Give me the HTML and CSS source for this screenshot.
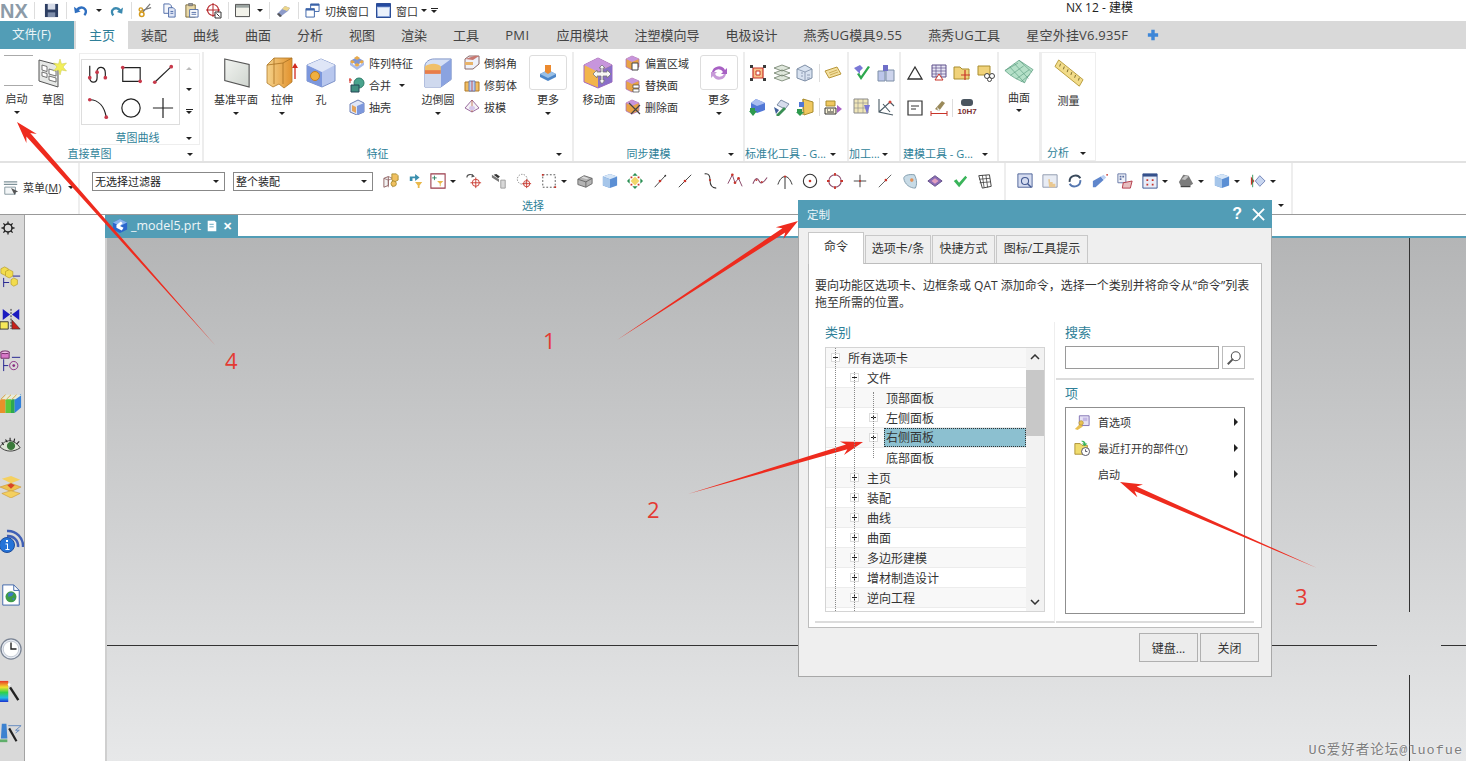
FILE: index.html
```html
<!DOCTYPE html>
<html lang="zh-CN">
<head>
    <meta charset="UTF-8">
    <title>NX 12 - 建模</title>
    <link rel="stylesheet" href="styles.css">
</head>
<body>
    <!-- shared icons -->
    <svg class="sprite" aria-hidden="true">
        <defs>
            <linearGradient id="gBlue" x1="0" y1="0" x2="0" y2="1"><stop offset="0" stop-color="#c9d6f2"/><stop offset="1" stop-color="#6f8fd0"/></linearGradient>
            <linearGradient id="gOrange" x1="0" y1="0" x2="1" y2="0"><stop offset="0" stop-color="#f5d28a"/><stop offset="1" stop-color="#e2922e"/></linearGradient>
            <linearGradient id="gPlane" x1="0" y1="0" x2="1" y2="1"><stop offset="0" stop-color="#f2f4f1"/><stop offset="1" stop-color="#cfd5cf"/></linearGradient>
            <linearGradient id="gHeat" x1="0" y1="0" x2="0" y2="1"><stop offset="0" stop-color="#e8362a"/><stop offset=".3" stop-color="#f3e12e"/><stop offset=".55" stop-color="#2ed14a"/><stop offset=".8" stop-color="#22b8e8"/><stop offset="1" stop-color="#1a2fd0"/></linearGradient>
        </defs>
        <symbol id="save" viewBox="0 0 16 16"><path d="M1 1h14v14H1z" fill="#2e3f63"/><path d="M4 1h8v6H4z" fill="#d5dbe8"/><path d="M4 10h8v5H4z" fill="#7e8daa"/></symbol>
        <symbol id="undo" viewBox="0 0 16 16"><path d="M3 9a5 5 0 0 1 9-2c1 1 1 4-1 6" fill="none" stroke="#2f6fc0" stroke-width="2.6"/><path d="M0 4l1 7 6-2z" fill="#2f6fc0"/></symbol>
        <symbol id="redo" viewBox="0 0 16 16"><path d="M13 9a5 5 0 0 0-9-2c-1 1-1 4 1 6" fill="none" stroke="#3c8ab0" stroke-width="2.6"/><path d="M16 4l-1 7-6-2z" fill="#3c8ab0"/></symbol>
        <symbol id="scissors" viewBox="0 0 16 16"><path d="M13 1L5 10M14 5L4 8" stroke="#777" stroke-width="1.3" fill="none"/><circle cx="4" cy="12" r="2.4" fill="none" stroke="#d49a1c" stroke-width="1.6"/><circle cx="3" cy="7" r="1.8" fill="none" stroke="#d49a1c" stroke-width="1.4"/></symbol>
        <symbol id="copy" viewBox="0 0 16 16"><path d="M2 1h6l2 2v8H2z" fill="#f4f6fb" stroke="#4f6ca8"/><path d="M7 5h5l2 2v8H7z" fill="#dfe6f6" stroke="#4f6ca8"/><path d="M9 9h3M9 11h3" stroke="#4f6ca8"/></symbol>
        <symbol id="paste" viewBox="0 0 16 16"><path d="M2 2h10v13H2z" fill="#e9d9a8" stroke="#7a6a3a"/><path d="M5 0h4v3H5z" fill="#999" stroke="#555" stroke-width=".5"/><path d="M6 7h9v8H6z" fill="#fff" stroke="#4f6ca8"/><path d="M8 10h5M8 12h5" stroke="#4f6ca8"/></symbol>
        <symbol id="crosshair" viewBox="0 0 16 16"><circle cx="7" cy="7" r="5.5" fill="none" stroke="#b5272a" stroke-width="1.2"/><path d="M7 0v14M0 7h14" stroke="#b5272a"/><path d="M9 9h6v6H9z" fill="#fff" stroke="#333"/><path d="M10.500 10.500l3 3" stroke="#333"/></symbol>
        <symbol id="windowbox" viewBox="0 0 16 16"><path d="M.5 1.500h15v13H.5z" fill="#f2f2ea" stroke="#444"/><path d="M1 2h14v3H1z" fill="#9aa3a0"/></symbol>
        <symbol id="eraser" viewBox="0 0 16 16"><path d="M1 11l8-8 5 2-2 3-8 6z" fill="#8d9bc9"/><path d="M9 3l5 2-3 3-5-2z" fill="#ecd589"/><path d="M1 11l3 3 2-1-3-3z" fill="#555"/></symbol>
        <symbol id="swap" viewBox="0 0 16 16"><path d="M6 1h9v8H6z" fill="#fff" stroke="#3a62a8"/><path d="M1 6h9v9H1z" fill="#fff" stroke="#3a62a8"/><path d="M6 1h9v2H6zM1 6h9v2H1z" fill="#3a62a8"/></symbol>
        <symbol id="winblue" viewBox="0 0 16 16"><path d="M.5.500h15v15H.5z" fill="url(#gBlue)" stroke="#1c3f8c"/><path d="M1 1h14v3H1z" fill="#244aa0"/><path d="M2 5h12v9H2z" fill="#eaf1fb"/></symbol>

        <symbol id="sketch" viewBox="0 0 30 30"><path d="M1 2l19 5v22L1 23z" fill="#e6e8e6" stroke="#555"/><path d="M4 7l5 1.500v5l-5-1.500zM4 14l5 1.500v4l-5-1.500zM11 11l7 2v5l-7-2zM11 18l7 2v4l-7-2z" fill="#fff" stroke="#555" stroke-width=".8"/><path d="M22 1l1.500 5 5-1-3.500 4 3.500 4-5-1-1.500 5-1.500-5-5 1 3.500-4-3.500-4 5 1z" fill="#f2ee5a" stroke="#c9c84a" stroke-width=".5"/></symbol>
        <symbol id="c-spline" viewBox="0 0 24 24"><path d="M3 3v13c0 7 8 6 8 0V9c0-6 9-6 9 2v5" fill="none" stroke="#222" stroke-width="1.3"/><circle cx="3" cy="16" r="2" fill="#c8384a"/><circle cx="11" cy="10" r="2" fill="#c8384a"/><circle cx="20" cy="16" r="2" fill="#c8384a"/></symbol>
        <symbol id="c-rect" viewBox="0 0 24 24"><path d="M3 5h19v15H3z" fill="none" stroke="#222" stroke-width="1.3"/><circle cx="3" cy="5" r="2" fill="#c8384a"/><circle cx="22" cy="20" r="2" fill="#c8384a"/></symbol>
        <symbol id="c-line" viewBox="0 0 24 24"><path d="M3 21L21 4" stroke="#222" stroke-width="1.3"/><circle cx="3" cy="21" r="2" fill="#c8384a"/><circle cx="21" cy="4" r="2" fill="#c8384a"/></symbol>
        <symbol id="c-arc" viewBox="0 0 24 24"><path d="M3 3c10 0 16 8 18 19" fill="none" stroke="#222" stroke-width="1.3"/><circle cx="3" cy="3" r="2" fill="#c8384a"/><circle cx="21" cy="22" r="2" fill="#c8384a"/></symbol>
        <symbol id="c-circle" viewBox="0 0 24 24"><circle cx="12" cy="12" r="10" fill="none" stroke="#222" stroke-width="1.3"/></symbol>
        <symbol id="c-plus" viewBox="0 0 24 24"><path d="M12 1v22M1 12h22" stroke="#222" stroke-width="1.3"/></symbol>

        <symbol id="datum" viewBox="0 0 30 32"><path d="M3 1l26 6v24L3 24z" fill="url(#gPlane)" stroke="#555" stroke-width="1.2"/></symbol>
        <symbol id="extrude" viewBox="0 0 32 32"><path d="M1 8l7-7 18 0 0 24-8 6-5-4-6 3-6-4z" fill="url(#gOrange)" stroke="#b07a2a" stroke-width=".8"/><path d="M8 1v26M17 6v21M1 8l16-2 9-5" fill="none" stroke="#a97122" stroke-width=".8"/><path d="M29 22V9" stroke="#d02a20" stroke-width="1.300"/><path d="M26 11l3-5 3 5z" fill="#d02a20"/></symbol>
        <symbol id="hole" viewBox="0 0 30 30"><path d="M15 1l14 6v16l-13 6L1 23V7z" fill="#b8c7ee" stroke="#7e93c9"/><path d="M1 7l15 7v15L1 23z" fill="#7c97dc"/><path d="M1 7l14-6 14 6-13 7z" fill="#dfe6f7"/><circle cx="9" cy="18" r="4.500" fill="#f0b040" stroke="#c27d1e"/></symbol>
        <symbol id="pattern" viewBox="0 0 16 16"><path d="M8 2l7 4-7 4-7-4z" fill="#7f96d4"/><path d="M8 1l3 2-3 2-3-2zM3 5l3 2-3 2-2-2zM13 5l2 2-2 2-3-2zM8 8l3 2-3 2-3-2z" fill="#e8a94a"/><path d="M1 7v3l7 5 7-5V7l-7 5z" fill="#a9bbea"/></symbol>
        <symbol id="unite" viewBox="0 0 16 16"><circle cx="10" cy="6" r="5" fill="#49a38d" stroke="#2f7d6a"/><path d="M2 8h8v7H2z" fill="#3f8f80" stroke="#245"/><path d="M1 1v5M0 3h3" stroke="#d02a20"/></symbol>
        <symbol id="shell" viewBox="0 0 16 16"><path d="M1 5l8-4 6 3v9l-7 3-7-3z" fill="#dfe6f7" stroke="#6d7fb5"/><path d="M8 7v9l7-3V4z" fill="#7c97dc"/><path d="M3 6l4 2v6l-4-2z" fill="#e2a35c"/></symbol>
        <symbol id="blend" viewBox="0 0 30 32"><path d="M1 9c0-5 5-8 10-8h18v22l-11 8H1z" fill="#d5e0f5" stroke="#7a8fc4"/><path d="M1 9c5-4 14-4 17 0h11L18 16H1z" fill="#f0c06a"/><path d="M1 13h17v4H1z" fill="#e87d4a"/><path d="M18 9l11-8v22l-11 8z" fill="#8aa3e0"/><path d="M1 17h17v14H1z" fill="#cfd9ee"/></symbol>
        <symbol id="chamfer" viewBox="0 0 16 16"><path d="M1 4l4-3h10v8l-6 5H1z" fill="#eef1fa" stroke="#8a6a6a"/><path d="M1 4l8 1 6-4-4-.2z" fill="#c87870"/><path d="M1 7h8v3H1z" fill="#e8b36a"/></symbol>
        <symbol id="trim" viewBox="0 0 16 16"><path d="M1 5h14v9H1z" fill="#f0bd62" stroke="#b07a2a"/><path d="M5 4h6v10H5z" fill="#bcd0f2" stroke="#6d7fb5"/><path d="M8 4v10" stroke="#d02a20" stroke-width=".7"/></symbol>
        <symbol id="draft" viewBox="0 0 16 16"><path d="M8 1L1 9l7 4 7-4z" fill="#f4f2f4" stroke="#9a6ca0"/><path d="M8 1v12" stroke="#b0502a" stroke-width=".7"/><ellipse cx="8" cy="9" rx="3" ry="2" fill="#d5c6ea"/></symbol>
        <symbol id="more1" viewBox="0 0 20 20"><path d="M2 11l8-4 8 4v3l-8 4-8-4z" fill="#4d86c8"/><path d="M2 11l8 4 8-4-8-4z" fill="#9ac0e6"/><path d="M7 9V2h6v7l-3 2z" fill="#ec8a2e"/></symbol>
        <symbol id="more2" viewBox="0 0 20 20"><path d="M3 9a7 7 0 0 1 13-2l2-2v6h-6l2-2a5 5 0 0 0-9 0z" fill="#a861c4"/><path d="M17 11a7 7 0 0 1-13 2l-2 2V9h6l-2 2a5 5 0 0 0 9 0z" fill="#c79ad8"/></symbol>
        <symbol id="moveface" viewBox="0 0 32 32"><path d="M15 1l14 7v17l-14 6L1 25V8z" fill="#f2b54c" stroke="#a56ac0"/><path d="M1 8l14-7 14 7-14 7z" fill="#c795dc"/><path d="M15 15l14-7v17l-14 6z" fill="#8a6fc8"/><path d="M19 8l3 3h-2v4h4v-2l4 4-4 4v-2h-4v4h2l-3 4-3-4h2v-4h-4v2l-4-4 4-4v2h4v-4h-2z" fill="#f7f7f4" stroke="#777" stroke-width=".8"/></symbol>
        <symbol id="offsetf" viewBox="0 0 16 16"><path d="M1 4l6-3 7 3v8l-7 3-6-3z" fill="#e9a346" stroke="#a56ac0" stroke-width=".7"/><path d="M1 4l6-3 7 3-7 3z" fill="#c795dc"/><path d="M7 8h6v7H7z" fill="#fff" stroke="#444"/></symbol>
        <symbol id="replacef" viewBox="0 0 16 16"><path d="M1 4l6-3 7 3v8l-7 3-6-3z" fill="#e9a346" stroke="#a56ac0" stroke-width=".7"/><path d="M1 4l6-3 7 3-7 3z" fill="#c795dc"/><path d="M8 8h6v3H8zM8 12h6v3H8z" fill="#fff" stroke="#444" stroke-width=".7"/></symbol>
        <symbol id="deletef" viewBox="0 0 16 16"><path d="M1 4l6-3 7 3v8l-7 3-6-3z" fill="#e9a346" stroke="#a56ac0" stroke-width=".7"/><path d="M1 4l6-3 7 3-7 3z" fill="#c795dc"/><path d="M4 4l11 11M15 6L6 15" stroke="#444" stroke-width="1.200"/></symbol>

        <symbol id="st1" viewBox="0 0 18 18"><path d="M4 4h10v10H4z" fill="#f7c28a" stroke="#c8342a" stroke-width="1.200"/><path d="M7 7h4v4H7z" fill="#fff" stroke="#c8342a"/><path d="M1 1h3v3H1zM14 1h3v3h-3zM1 14h3v3H1zM14 14h3v3h-3z" fill="#3a3a3a"/></symbol>
        <symbol id="st2" viewBox="0 0 18 18"><path d="M9 1l8 3-8 3-8-3zM9 6l8 3-8 3-8-3zM9 11l8 3-8 3-8-3z" fill="#dfe7dc" stroke="#6f7d6a" stroke-width=".8"/></symbol>
        <symbol id="st3" viewBox="0 0 18 18"><path d="M9 1l7 4v9l-7 3-8-3V5z" fill="#d8e2f0" stroke="#7d8ea6"/><path d="M1 5l8 3 7-3M9 8v9M5 9h2M5 12h2M11 11h3M11 14h3" fill="none" stroke="#7d8ea6" stroke-width=".8"/></symbol>
        <symbol id="st4" viewBox="0 0 18 18"><path d="M1 7l12-4 4 7-12 4z" fill="#f3df9e" stroke="#b99738"/><path d="M5 9l8-3M6 11l8-3" stroke="#b99738" stroke-width=".7"/></symbol>
        <symbol id="st5" viewBox="0 0 18 18"><path d="M7 1l9 4v7l-8 3-6-3V5z" fill="#5177d6"/><path d="M7 1l9 4-8 3-6-3z" fill="#a9bdf0"/><path d="M1 10h5v3h2l-4 5-4-5h1z" fill="#2e9a4e"/></symbol>
        <symbol id="st6" viewBox="0 0 18 18"><path d="M8 2l8 4-4 5-8-4z" fill="#d7ddec" stroke="#7d8ea6"/><path d="M3 17l8-8 2 2-8 8z" fill="#3a8f54"/><path d="M1 9l5 3-3 4z" fill="#3f5f9a"/></symbol>
        <symbol id="st7" viewBox="0 0 18 18"><path d="M7 1l10 3v10l-9 3z" fill="#f0c860" stroke="#a98d2f"/><path d="M7 1v16" stroke="#a98d2f"/><path d="M1 11h5v3h2l-4 4-4-4h1z" fill="#2e9a4e"/><path d="M3 4h5v5H3z" fill="#5177d6"/></symbol>
        <symbol id="st8" viewBox="0 0 18 18"><path d="M2 3h9v5H2z" fill="#f0c860" stroke="#a98d2f"/><path d="M1 10h11v6H1z" fill="#f7f2d8" stroke="#333"/><path d="M3 12h1M6 12h1M9 12h1M3 14h7" stroke="#333"/><path d="M13 7l5 4-5 4z" fill="#a861c4"/></symbol>
        <symbol id="mc1" viewBox="0 0 18 18"><path d="M1 4l6-3 3 3-3 3v3z" fill="#7a78d6"/><path d="M4 10l4 6L17 3l-2-1-7 10-2-3z" fill="#2ea84e"/></symbol>
        <symbol id="mc2" viewBox="0 0 18 18"><path d="M1 7h7v10H1z" fill="#bcc6ea" stroke="#7d8ea6"/><path d="M9 6h8v11H9z" fill="#cdd4ec" stroke="#7d8ea6"/><path d="M6 1h5v6H6z" fill="#6e6ec8"/></symbol>
        <symbol id="mc3" viewBox="0 0 18 18"><path d="M1 1h14v14H1z" fill="#f0e6b8" stroke="#8a8a8a"/><path d="M1 5h14M1 10h14M5 1v14M10 1v14" stroke="#8a8a8a" stroke-width=".6"/><path d="M11 7h6l-3 9z" fill="#7a78d6"/></symbol>
        <symbol id="mc4" viewBox="0 0 18 18"><path d="M2 1v13l14 3M2 14L13 4l4 4M6 6l7 8" fill="none" stroke="#4a5a64" stroke-width="1.100"/><circle cx="13" cy="4" r="1.500" fill="#d0443a"/></symbol>
        <symbol id="tri" viewBox="0 0 18 18"><path d="M9 3l7 12H2z" fill="none" stroke="#333" stroke-width="1.300"/></symbol>
        <symbol id="tbl" viewBox="0 0 18 18"><path d="M2 1h14v12H2z" fill="#e8e6f4" stroke="#5c4f8a"/><path d="M2 4h14M2 7h14M2 10h14M6 1v12M11 1v12" stroke="#5c4f8a" stroke-width=".7"/><path d="M9 10l4 6H5z" fill="#fff" stroke="#c8342a"/></symbol>
        <symbol id="cross1" viewBox="0 0 18 18"><path d="M1 3h6l2 2h7v10H1z" fill="#f0d27a" stroke="#a98d2f"/><path d="M12 6v10M8 11h9" stroke="#c8342a" stroke-width="1.200"/></symbol>
        <symbol id="cross2" viewBox="0 0 18 18"><path d="M1 2h12v9H1z" fill="#f0d27a" stroke="#a98d2f"/><circle cx="10" cy="12" r="2.500" fill="#fff" stroke="#444"/><circle cx="15" cy="12" r="2.500" fill="#fff" stroke="#444"/><circle cx="12.500" cy="15.500" r="2" fill="#fff" stroke="#444"/></symbol>
        <symbol id="note" viewBox="0 0 18 18"><path d="M2 2h14v14H2z" fill="#fff" stroke="#333" stroke-width="1.200"/><path d="M5 7h8M5 10h5" stroke="#333"/></symbol>
        <symbol id="dim" viewBox="0 0 18 18"><path d="M1 12v5M17 12v5M1 14.500h16" stroke="#c8342a"/><path d="M5 10l7-8 3 2-6 8z" fill="#9a8a5a"/><path d="M7 8l3 3-2 1z" fill="#eee"/></symbol>
        <symbol id="surface" viewBox="0 0 32 26"><path d="M1 12L16 1l15 10c-3 4-7 9-9 14-7-3-15-7-21-13z" fill="#b5e0c8" stroke="#5e9f83" stroke-width=".8"/><path d="M6 8l16 17M11 4.500l15 16M16 1l14 13M1 12l14-8M7 17l14-10M13 21l14-10M18 24l10-8" stroke="#5e9f83" stroke-width=".7" fill="none"/></symbol>
        <symbol id="ruler" viewBox="0 0 32 32"><path d="M5 1l26 21-4 7L1 8z" fill="#f2dc8a" stroke="#b89b3a"/><path d="M7 5l-1 3M11 8l-1 3M15 11l-1 3M19 14l-1 3M23 17l-1 3M27 20l-1 3" stroke="#7a6a2a"/></symbol>

        <symbol id="sel1" viewBox="0 0 18 18"><path d="M1 6l5-2v10l-5 2z" fill="#f2f2f2" stroke="#8a5a5a"/><path d="M6 4l5 2v10M1 6l5 2 5-2M6 8v8" fill="none" stroke="#8a5a5a" stroke-width=".8"/><path d="M10 1h5l2 2v5l-4 2-3-2z" fill="#f0c060" stroke="#a98d2f"/><circle cx="12" cy="12" r="3" fill="#f0c060" stroke="#a98d2f"/></symbol>
        <symbol id="sel2" viewBox="0 0 18 18"><path d="M2 4h6V1l5 4-5 4V6H5v3H2z" fill="#3a8fae"/><path d="M8 10h8l-3 4v3h-2v-3z" fill="#e9b84a"/></symbol>
        <symbol id="sel3" viewBox="0 0 18 18"><path d="M1 1h16v16H1z" fill="#fff" stroke="#9a3a4a" stroke-width="1.200"/><path d="M5 3v5M2.500 5.500h5" stroke="#2a7c5a"/><path d="M8 9h7l-3 3v3h-1v-3z" fill="#e9b84a"/></symbol>
        <symbol id="sel4" viewBox="0 0 18 18"><path d="M1 5c0-4 5-4 7-2" fill="none" stroke="#555" stroke-width="1.300"/><path d="M7 1l3 3-4 1z" fill="#555"/><circle cx="11" cy="11" r="4" fill="none" stroke="#c8342a"/><path d="M11 5v12M5 11h12" stroke="#c8342a"/></symbol>
        <symbol id="sel5" viewBox="0 0 18 18"><path d="M1 2l8 5v3l-8-5z" fill="#777"/><path d="M3 2l3-1 4 3-2 2z" fill="#333"/><path d="M11 8h5v9h-5z" fill="#d8d8d8" stroke="#999"/></symbol>
        <symbol id="sel6" viewBox="0 0 18 18"><circle cx="7" cy="7" r="5.500" fill="none" stroke="#777" stroke-dasharray="1.500 1.500"/><circle cx="12" cy="12" r="3.500" fill="none" stroke="#c8342a"/><path d="M12 7v10M7 12h10" stroke="#c8342a"/></symbol>
        <symbol id="sel7" viewBox="0 0 18 18"><path d="M2 2h14v14H2z" fill="none" stroke="#444" stroke-dasharray="2 2"/><path d="M1 1h2v2H1zM15 15h2v2h-2z" fill="#c8342a"/></symbol>
        <symbol id="sel8" viewBox="0 0 18 18"><path d="M1 7l7-4 9 3v6l-7 4-9-3z" fill="#b4b4b4" stroke="#666"/><path d="M1 7l9 3 7-4M10 10v6" fill="none" stroke="#666"/><path d="M5 5l6 2 2-1-6-2z" fill="#ddd"/></symbol>
        <symbol id="sel9" viewBox="0 0 18 18"><path d="M9 1l8 3v10l-8 3-8-3V4z" fill="#5b8fd4"/><path d="M1 4l8 3 8-3-8-3z" fill="#d6e6f7"/><path d="M1 4l8 3v10l-8-3z" fill="#a6c6ea"/></symbol>
        <symbol id="sel10" viewBox="0 0 18 18"><path d="M9 4l5 5-5 5-5-5z" fill="#f2d76a"/><path d="M9 0l3 3H6zM9 18l-3-3h6zM0 9l3-3v6zM18 9l-3 3V6z" fill="#2a8f54"/><path d="M4 4h2v2H4zM12 4h2v2h-2zM4 12h2v2H4zM12 12h2v2h-2z" fill="#c8342a"/></symbol>
        <symbol id="sel11" viewBox="0 0 18 18"><path d="M3 16L15 3" stroke="#333"/><circle cx="9" cy="9" r="1.500" fill="#c8342a"/><circle cx="15" cy="3" r="1" fill="#333"/></symbol>
        <symbol id="sel12" viewBox="0 0 18 18"><path d="M2 16L16 2" stroke="#333"/><circle cx="9" cy="9" r="1.500" fill="#c8342a"/></symbol>
        <symbol id="sel13" viewBox="0 0 18 18"><path d="M3 1c5-1 6 3 6 7s1 9 7 9" fill="none" stroke="#333" stroke-width="1.200"/><circle cx="9" cy="8" r="1.300" fill="#c8342a"/></symbol>
        <symbol id="sel14" viewBox="0 0 18 18"><path d="M1 12L6 2l3 9 4-5 4 9" fill="none" stroke="#8a4a6a" stroke-width="1.100"/><circle cx="6" cy="2" r="1.500" fill="#c8342a"/><circle cx="9" cy="11" r="1.500" fill="#c8342a"/><circle cx="13" cy="6" r="1.500" fill="#c8342a"/></symbol>
        <symbol id="sel15" viewBox="0 0 18 18"><path d="M1 12c3-7 5-7 7-3s5 2 9-4" fill="none" stroke="#8a4a6a" stroke-width="1.200"/><circle cx="5" cy="8" r="1" fill="#c8342a"/><circle cx="11" cy="10" r="1" fill="#c8342a"/></symbol>
        <symbol id="sel16" viewBox="0 0 18 18"><path d="M9 4v14M1 13c2-6 5-9 8-9s6 3 8 9" fill="none" stroke="#333" stroke-width="1.100"/><circle cx="9" cy="4" r="1.200" fill="#c8342a"/></symbol>
        <symbol id="sel17" viewBox="0 0 18 18"><circle cx="9" cy="9" r="7.500" fill="none" stroke="#333" stroke-width="1.200"/><circle cx="9" cy="9" r="1.500" fill="#c8342a"/></symbol>
        <symbol id="sel18" viewBox="0 0 18 18"><circle cx="9" cy="9" r="7" fill="none" stroke="#8a4a6a" stroke-width="1.200"/><path d="M8 0h2v3H8zM8 15h2v3H8zM0 8h3v2H0zM15 8h3v2h-3z" fill="#c8342a"/></symbol>
        <symbol id="sel19" viewBox="0 0 18 18"><path d="M9 2v14M2 9h14" stroke="#333"/><circle cx="9" cy="9" r="1.200" fill="#c8342a"/></symbol>
        <symbol id="sel20" viewBox="0 0 18 18"><path d="M2 16l8-8 6-6" stroke="#555"/><circle cx="10" cy="8" r="1.500" fill="#c8342a"/></symbol>
        <symbol id="sel21" viewBox="0 0 18 18"><path d="M2 6c0-3 5-5 12-4 3 6 3 11 1 15C9 17 3 13 2 6z" fill="#c8dbe6" stroke="#7a96a8"/><circle cx="11" cy="8" r="2" fill="#e2915a"/></symbol>
        <symbol id="sel22" viewBox="0 0 18 18"><path d="M1 9l8-6 8 6-8 6z" fill="#8a6cb5" stroke="#5c4a82"/><path d="M5 9l4-3 4 3-4 3z" fill="#e2a0c0"/></symbol>
        <symbol id="check" viewBox="0 0 18 18"><path d="M2 9l3-2 3 4 7-8 2 2-9 11z" fill="#3ab45a"/></symbol>
        <symbol id="grid3" viewBox="0 0 18 18"><path d="M2 3l12-1 2 13-10 2z" fill="#fff" stroke="#333"/><path d="M6 2.500l2 14M10 2.300l2 14M2.500 7l12-1M3 11l12-1" stroke="#333" stroke-width=".8"/></symbol>
        <symbol id="v1" viewBox="0 0 18 18"><path d="M1 1h16v15H1z" fill="#d5dcf0" stroke="#445a92"/><circle cx="9" cy="9" r="4" fill="none" stroke="#445a92" stroke-width="1.200"/><path d="M12 12l4 4" stroke="#445a92" stroke-width="1.500"/></symbol>
        <symbol id="v2" viewBox="0 0 18 18"><path d="M1 2h16v14H1z" fill="#e8ecf4" stroke="#8a94aa"/><path d="M7 7h2v3h3v2h3v4H8z" fill="#e9c892"/></symbol>
        <symbol id="v3" viewBox="0 0 18 18"><path d="M3 10A6.500 6.500 0 0 1 15 6" fill="none" stroke="#3a4a5c" stroke-width="2.200"/><path d="M15 8A6.500 6.500 0 0 1 3 12" fill="none" stroke="#5577b0" stroke-width="2.200"/></symbol>
        <symbol id="v4" viewBox="0 0 18 18"><path d="M1 9l9-5 3 4-9 8H1z" fill="#5f86cc"/><path d="M10 4l3 4 3-3-3-3z" fill="#bcd0f2"/><circle cx="17" cy="2" r="1" fill="#c8342a"/></symbol>
        <symbol id="v5" viewBox="0 0 18 18"><path d="M1 1h9v10H1z" fill="#eef1f8" stroke="#5c6fa0"/><path d="M3 3h2v2H3zM6 3h2v2H6zM3 6h2v2H3z" fill="#5c6fa0"/><path d="M7 11l10-2-2 8H6z" fill="#e7bfc0" stroke="#b03040"/></symbol>
        <symbol id="v6" viewBox="0 0 18 18"><path d="M1 1h16v16H1z" fill="#e8ecf8" stroke="#34508c"/><path d="M1 1h16v3H1z" fill="#34508c"/><path d="M5 7h2v2H5zM11 7h2v2h-2zM5 12h2v2H5zM11 12h2v2h-2z" fill="#c8342a"/></symbol>
        <symbol id="v7" viewBox="0 0 18 18"><path d="M1 10l5-8 6 1 5 9-3 2H3z" fill="#7c7c7c"/><path d="M4 7l4-4 4 1-4 4z" fill="#c4c4c4"/><path d="M3 14h11v2H3z" fill="#444"/></symbol>
        <symbol id="v9" viewBox="0 0 18 18"><path d="M1 4l4 5-4 5z" fill="#c8342a"/><path d="M6 9l5-6 6 6-6 6z" fill="#c8d6f0" stroke="#6d7fb5"/><path d="M3 2v14" stroke="#2a8f54"/></symbol>
        <symbol id="menu" viewBox="0 0 18 18"><path d="M1 2h15M1 5h15" stroke="#7f9299" stroke-width="1.400"/><path d="M2 8h12v8H2z" fill="#f3f6f7" stroke="#7f9299"/><path d="M9 9l4 8 1-3 3-1z" fill="#555"/></symbol>

        <symbol id="gear" viewBox="0 0 14 14"><circle cx="7" cy="7" r="4" fill="none" stroke="#222" stroke-width="1.500"/><path d="M7 .5v2.500M7 11v2.500M.5 7h2.500M11 7h2.500M2.400 2.400l1.800 1.800M9.800 9.800l1.800 1.800M2.400 11.600l1.800-1.800M9.800 4.200l1.800-1.800" stroke="#222" stroke-width="1.300"/></symbol>
        <symbol id="r1" viewBox="0 0 24 24"><path d="M1 3l4-2 4 2v5l-4 2-4-2z" fill="#f2dc4e" stroke="#b59a20" stroke-width=".7"/><path d="M6 6l4-2 4 2v5l-4 2-4-2z" fill="#f2dc4e" stroke="#b59a20" stroke-width=".7"/><path d="M4 13v10M4 18h6M14 11h8" stroke="#1a1a8c"/><path d="M12 15l3-2 4 2v5l-4 2-3-2z" fill="#f2dc4e" stroke="#b59a20" stroke-width=".7"/></symbol>
        <symbol id="r2" viewBox="0 0 24 24"><path d="M3 1l8 6-8 6zM21 1l-8 6 8 6z" fill="#1a1ac0"/><path d="M12 1v22" stroke="#222" stroke-dasharray="2 1.500"/><path d="M0 15h9v8H0z" fill="#f6e85a" stroke="#333"/><path d="M13 13l9 10h-9z" fill="#c8201a" stroke="#333" stroke-width=".7"/></symbol>
        <symbol id="r3" viewBox="0 0 24 24"><path d="M1 2h9v7H1z" fill="#d878c8" stroke="#6a2a60"/><ellipse cx="5.500" cy="2.500" rx="4.500" ry="1.500" fill="#f0c0e8" stroke="#6a2a60"/><path d="M4 10v13M4 17h5M13 8h9" stroke="#1a1a8c"/><circle cx="15" cy="17" r="4.500" fill="none" stroke="#8a2a80"/><circle cx="15" cy="17" r="1.500" fill="#8a2a80"/></symbol>
        <symbol id="r4" viewBox="0 0 24 24"><path d="M0 9l6-6v20H0z" fill="#e8902a"/><path d="M6 9l6-6v20H6z" fill="#5cc83a"/><path d="M12 9l4-6v20h-4z" fill="#2ea84e"/><path d="M16 8l7-6v15l-7 6z" fill="#2f80dc"/><path d="M1 8l5-5h18l-7 5z" fill="#e8ecd8"/><path d="M6 3L1 8M12 3L7 8M18 3l-5 5" stroke="#d8a040"/></symbol>
        <symbol id="r5" viewBox="0 0 24 24"><path d="M0 14c6-9 15-9 22 1-7 5-16 5-22-1z" fill="#dfe6d8" stroke="#333"/><circle cx="12" cy="13" r="4.500" fill="#3a7a3a"/><path d="M2 9l2 3M6 6l2 3M11 4v4M16 5l-1 4M21 8l-3 3" stroke="#222" stroke-width="1.200"/></symbol>
        <symbol id="r6" viewBox="0 0 24 24"><path d="M2 3l10-3 10 4-10 4z" fill="#f4d060"/><path d="M0 12l12-4 11 4-11 5z" fill="#eec14e" stroke="#c9922a" stroke-width=".6"/><path d="M2 19l10-3 10 3-10 5z" fill="#f4d060" stroke="#c9922a" stroke-width=".6"/><path d="M8 10l4 4 4-4-4-2z" fill="#d8442a"/></symbol>
        <symbol id="r7" viewBox="0 0 24 24"><path d="M7 2a15 15 0 0 1 16 16" fill="none" stroke="#3f5fb5" stroke-width="2.500"/><path d="M7 7a10 10 0 0 1 11 11" fill="none" stroke="#3f5fb5" stroke-width="2.500"/><circle cx="7" cy="16" r="7.500" fill="#2573d8" stroke="#1d4c9a"/><path d="M6 11h2v2H6zM5.500 14.500H8V20h1.500v1h-4v-1H7v-4.500H5.500z" fill="#fff"/></symbol>
        <symbol id="r8" viewBox="0 0 20 24"><path d="M1 1h12l6 6v16H1z" fill="#fff" stroke="#3a62a8"/><path d="M13 1v6h6" fill="none" stroke="#3a62a8"/><circle cx="10" cy="14" r="6" fill="#3f9c48"/><path d="M7 10c2-1 5-1 6 0l-2 3-4 1zM11 16l3-1-1 3z" fill="#3f78c8"/></symbol>
        <symbol id="r9" viewBox="0 0 24 24"><circle cx="12" cy="12" r="11" fill="#e6eaf2" stroke="#7a8494" stroke-width="1.400"/><circle cx="12" cy="12" r="8.500" fill="#fff" stroke="#c0c6d0"/><path d="M12 5v7h6" fill="none" stroke="#222" stroke-width="1.500"/></symbol>
        <symbol id="r10" viewBox="0 0 24 24"><path d="M0 1h9v23H0z" fill="url(#gHeat)"/><path d="M11 8l9 14" stroke="#222" stroke-width="2.600"/><circle cx="10" cy="5" r="1.500" fill="#fff"/></symbol>
        <symbol id="r11" viewBox="0 0 24 24"><path d="M2 2h5l1 16H1z" fill="#3d82d0"/><path d="M0 19h8v3H0z" fill="#5fae6a"/><path d="M9 4h14l-6 5h4l-4 3" fill="none" stroke="#5f88c0"/><path d="M10 7l8 14" stroke="#222" stroke-width="2.400"/></symbol>

        <symbol id="pref" viewBox="0 0 18 18"><path d="M6 2h11v11H6z" fill="#e6e2f4" stroke="#7a6ab0"/><path d="M10 4h5v4h-5z" fill="#c4b8e6"/><path d="M1 17l6-6 3 3-6 4z" fill="#e9c052"/><circle cx="8" cy="10" r="2.500" fill="#e9c052" stroke="#a98d2f" stroke-width=".7"/></symbol>
        <symbol id="recent" viewBox="0 0 18 18"><path d="M1 4h6l2 2h6v10H1z" fill="#f0dc6e" stroke="#a98d2f"/><path d="M8 1c3-1 5 1 5 3h2l-3 3-3-3h2c0-1-1-2-3-3z" fill="#3ab45a"/><circle cx="13" cy="13" r="4.500" fill="#fff" stroke="#445"/><path d="M13 10.500V13h2" fill="none" stroke="#445"/></symbol>
        <symbol id="search" viewBox="0 0 18 18"><circle cx="11" cy="7" r="5" fill="#fff" stroke="#555" stroke-width="1.200"/><path d="M8 10l-6 6" stroke="#555" stroke-width="2.200"/></symbol>
        <symbol id="part" viewBox="0 0 18 18"><path d="M9 1l8 4v8l-8 4-8-4V5z" fill="#2a66cc"/><path d="M9 1l8 4-8 4-8-4z" fill="#8ab4ee"/><path d="M5 8l5-4 2 2-3 3 4 2-2 3-6-3z" fill="#fff"/></symbol>
        <symbol id="pagemark" viewBox="0 0 14 14"><path d="M2 1h8l2 2v10H2z" fill="#fff"/><path d="M4 5h5M4 8h5" stroke="#529db6"/></symbol>
        <symbol id="plus" viewBox="0 0 14 14"><path d="M5 1h4v4h4v4H9v4H5V9H1V5h4z" fill="#3d86d8"/></symbol>
    </svg>

    <div class="qat">
        <span class="nx-logo">NX</span>
        <span class="qat-sep"></span>
        <svg class="ic i15 at-save"><use href="#save"/></svg>
        <span class="qat-sep sep-a"></span>
        <svg class="ic i15 at-undo"><use href="#undo"/></svg>
        <span class="caret at-c1"></span>
        <svg class="ic i14 at-redo"><use href="#redo"/></svg>
        <span class="qat-sep sep-b"></span>
        <svg class="ic i15 at-cut"><use href="#scissors"/></svg>
        <svg class="ic i15 at-copy"><use href="#copy"/></svg>
        <svg class="ic i15 at-q"><use href="#paste"/></svg>
        <svg class="ic i16 at-q"><use href="#crosshair"/></svg>
        <span class="qat-sep sep-c"></span>
        <svg class="ic i15 at-win"><use href="#windowbox"/></svg>
        <span class="caret at-c2"></span>
        <span class="qat-sep sep-d"></span>
        <svg class="ic i16 at-win"><use href="#eraser"/></svg>
        <span class="qat-sep sep-c"></span>
        <svg class="ic i15 at-win"><use href="#swap"/></svg>
        <span class="qat-text">切换窗口</span>
        <svg class="ic i15 at-win2"><use href="#winblue"/></svg>
        <span class="qat-text">窗口</span>
        <span class="caret at-c3"></span>
        <span class="caret-menu at-c4"></span>
        <span class="app-title">NX 12 - 建模</span>
    </div>

    <div class="tabs">
        <div class="tab-file">文件(F)</div>
        <div class="tab active">主页</div>
        <div class="tab">装配</div>
        <div class="tab">曲线</div>
        <div class="tab">曲面</div>
        <div class="tab">分析</div>
        <div class="tab">视图</div>
        <div class="tab">渲染</div>
        <div class="tab">工具</div>
        <div class="tab tab-pmi">PMI</div>
        <div class="tab">应用模块</div>
        <div class="tab">注塑模向导</div>
        <div class="tab">电极设计</div>
        <div class="tab tab-wide">燕秀UG模具9.55</div>
        <div class="tab tab-wide">燕秀UG工具</div>
        <div class="tab tab-wide">星空外挂V6.935F</div>
        <svg class="ic i12 tab-plus"><use href="#plus"/></svg>
    </div>

    <div class="ribbon">
        <section class="group g-sketch">
            <div class="group-body">
                <div class="big w33">
                    <div class="big-icon blank-icon"></div>
                    <span>启动</span><i class="caret"></i>
                </div>
                <div class="big w36">
                    <div class="big-icon"><svg class="ic i30"><use href="#sketch"/></svg></div>
                    <span>草图</span>
                </div>
                <div class="subgroup">
                    <div class="sub-top">
                        <div class="gallery">
                            <svg class="ic i22"><use href="#c-spline"/></svg>
                            <svg class="ic i22"><use href="#c-rect"/></svg>
                            <svg class="ic i22"><use href="#c-line"/></svg>
                            <svg class="ic i22"><use href="#c-arc"/></svg>
                            <svg class="ic i22"><use href="#c-circle"/></svg>
                            <svg class="ic i22"><use href="#c-plus"/></svg>
                        </div>
                        <div class="gallery-scroll">
                            <i class="caret-up"></i><i class="caret"></i><i class="caret-menu"></i>
                        </div>
                    </div>
                    <div class="group-label sub-label"><span>草图曲线</span><i class="caret"></i></div>
                </div>
            </div>
            <div class="group-label center-label"><span>直接草图</span><i class="caret"></i></div>
        </section>

        <section class="group g-feature">
            <div class="group-body">
                <div class="big w46">
                    <div class="big-icon"><svg class="ic i30"><use href="#datum"/></svg></div>
                    <span>基准平面</span><i class="caret"></i>
                </div>
                <div class="big w46">
                    <div class="big-icon"><svg class="ic i32"><use href="#extrude"/></svg></div>
                    <span>拉伸</span><i class="caret"></i>
                </div>
                <div class="big w32">
                    <div class="big-icon"><svg class="ic i30"><use href="#hole"/></svg></div>
                    <span>孔</span>
                </div>
                <div class="rows r-pattern">
                    <div class="row"><svg class="ic i16"><use href="#pattern"/></svg>阵列特征</div>
                    <div class="row"><svg class="ic i16"><use href="#unite"/></svg>合并<i class="caret"></i></div>
                    <div class="row"><svg class="ic i16"><use href="#shell"/></svg>抽壳</div>
                </div>
                <div class="big w38">
                    <div class="big-icon"><svg class="ic i30"><use href="#blend"/></svg></div>
                    <span>边倒圆</span><i class="caret"></i>
                </div>
                <div class="rows r-chamfer">
                    <div class="row"><svg class="ic i16"><use href="#chamfer"/></svg>倒斜角</div>
                    <div class="row"><svg class="ic i16"><use href="#trim"/></svg>修剪体</div>
                    <div class="row"><svg class="ic i16"><use href="#draft"/></svg>拔模</div>
                </div>
                <div class="big w38 more">
                    <div class="big-icon more-box"><svg class="ic i20"><use href="#more1"/></svg></div>
                    <span>更多</span><i class="caret"></i>
                </div>
            </div>
            <div class="group-label center-label"><span>特征</span><i class="caret"></i></div>
        </section>

        <section class="group g-sync">
            <div class="group-body">
                <div class="big w44">
                    <div class="big-icon"><svg class="ic i32"><use href="#moveface"/></svg></div>
                    <span>移动面</span>
                </div>
                <div class="rows r-sync">
                    <div class="row"><svg class="ic i16"><use href="#offsetf"/></svg>偏置区域</div>
                    <div class="row"><svg class="ic i16"><use href="#replacef"/></svg>替换面</div>
                    <div class="row"><svg class="ic i16"><use href="#deletef"/></svg>删除面</div>
                </div>
                <div class="big w38 more">
                    <div class="big-icon more-box"><svg class="ic i20"><use href="#more2"/></svg></div>
                    <span>更多</span><i class="caret"></i>
                </div>
            </div>
            <div class="group-label center-label"><span>同步建模</span><i class="caret"></i></div>
        </section>

        <section class="group g-std">
            <div class="icon-grid">
                <div class="icon-row">
                    <svg class="ic i18"><use href="#st1"/></svg>
                    <svg class="ic i18"><use href="#st2"/></svg>
                    <svg class="ic i18"><use href="#st3"/></svg>
                    <span class="vsep"></span>
                    <svg class="ic i18"><use href="#st4"/></svg>
                </div>
                <div class="icon-row">
                    <svg class="ic i18"><use href="#st5"/></svg>
                    <svg class="ic i18"><use href="#st6"/></svg>
                    <svg class="ic i18"><use href="#st7"/></svg>
                    <span class="vsep"></span>
                    <svg class="ic i18"><use href="#st8"/></svg>
                </div>
            </div>
            <div class="group-label"><span>标准化工具 - G...</span><i class="caret"></i></div>
        </section>

        <section class="group g-mach">
            <div class="icon-grid">
                <div class="icon-row">
                    <svg class="ic i18"><use href="#mc1"/></svg>
                    <svg class="ic i18"><use href="#mc2"/></svg>
                </div>
                <div class="icon-row">
                    <svg class="ic i18"><use href="#mc3"/></svg>
                    <svg class="ic i18"><use href="#mc4"/></svg>
                </div>
            </div>
            <div class="group-label"><span>加工...</span><i class="caret"></i></div>
        </section>

        <section class="group g-build">
            <div class="icon-grid">
                <div class="icon-row">
                    <svg class="ic i18"><use href="#tri"/></svg>
                    <svg class="ic i18"><use href="#tbl"/></svg>
                    <svg class="ic i18"><use href="#cross1"/></svg>
                    <svg class="ic i18"><use href="#cross2"/></svg>
                </div>
                <div class="icon-row">
                    <svg class="ic i18"><use href="#note"/></svg>
                    <svg class="ic i18"><use href="#dim"/></svg>
                    <span class="vsep"></span>
                    <span class="fit-tag">10H7</span>
                </div>
            </div>
            <div class="group-label"><span>建模工具 - G...</span><i class="caret"></i></div>
        </section>

        <section class="group g-surf">
            <div class="group-body">
                <div class="big surf-btn">
                    <div class="big-icon"><svg class="ic i30-26"><use href="#surface"/></svg></div>
                    <span>曲面</span><i class="caret"></i>
                </div>
            </div>
        </section>

        <section class="group g-ana">
            <div class="group-body">
                <div class="big ana-btn">
                    <div class="big-icon"><svg class="ic i30"><use href="#ruler"/></svg></div>
                    <span>测量</span>
                </div>
            </div>
            <div class="group-label"><span>分析</span><i class="caret"></i></div>
        </section>
    </div>

    <div class="selbar">
        <div class="menu-btn">
            <svg class="ic i16"><use href="#menu"/></svg>
            <span>菜单(<u>M</u>)</span><i class="caret"></i>
        </div>
        <div class="sel-group sel-left">
            <div class="sel-row">
                <div class="combo c1">无选择过滤器<i class="caret combo-caret"></i></div>
                <div class="combo c2">整个装配<i class="caret combo-caret"></i></div>
                <div class="cell"><svg class="ic i16"><use href="#sel1"/></svg></div>
                <div class="cell"><svg class="ic i16"><use href="#sel2"/></svg></div>
                <div class="cell tight"><svg class="ic i16"><use href="#sel3"/></svg></div>
                <div class="cell-caret"><i class="caret"></i></div>
                <div class="cell"><svg class="ic i16"><use href="#sel4"/></svg></div>
                <div class="cell"><svg class="ic i16"><use href="#sel5"/></svg></div>
                <div class="cell"><svg class="ic i16"><use href="#sel6"/></svg></div>
                <div class="cell"><svg class="ic i16"><use href="#sel7"/></svg></div>
                <div class="cell-caret"><i class="caret"></i></div>
                <div class="cell"><svg class="ic i16"><use href="#sel8"/></svg></div>
                <div class="cell"><svg class="ic i16"><use href="#sel9"/></svg></div>
                <div class="cell"><svg class="ic i16"><use href="#sel10"/></svg></div>
                <div class="cell"><svg class="ic i16"><use href="#sel11"/></svg></div>
                <div class="cell"><svg class="ic i16"><use href="#sel12"/></svg></div>
                <div class="cell"><svg class="ic i16"><use href="#sel13"/></svg></div>
                <div class="cell"><svg class="ic i16"><use href="#sel14"/></svg></div>
                <div class="cell"><svg class="ic i16"><use href="#sel15"/></svg></div>
                <div class="cell"><svg class="ic i16"><use href="#sel16"/></svg></div>
                <div class="cell"><svg class="ic i16"><use href="#sel17"/></svg></div>
                <div class="cell"><svg class="ic i16"><use href="#sel18"/></svg></div>
                <div class="cell"><svg class="ic i16"><use href="#sel19"/></svg></div>
                <div class="cell"><svg class="ic i16"><use href="#sel20"/></svg></div>
                <div class="cell"><svg class="ic i16"><use href="#sel21"/></svg></div>
                <div class="cell"><svg class="ic i16"><use href="#sel22"/></svg></div>
                <div class="cell"><svg class="ic i16"><use href="#check"/></svg></div>
                <div class="cell"><svg class="ic i16"><use href="#grid3"/></svg></div>
            </div>
            <div class="sel-label">选择</div>
        </div>
        <div class="sel-group sel-right">
            <div class="sel-row">
                <div class="cell"><svg class="ic i16"><use href="#v1"/></svg></div>
                <div class="cell"><svg class="ic i16"><use href="#v2"/></svg></div>
                <div class="cell"><svg class="ic i16"><use href="#v3"/></svg></div>
                <div class="cell"><svg class="ic i16"><use href="#v4"/></svg></div>
                <div class="cell"><svg class="ic i16"><use href="#v5"/></svg></div>
                <div class="cell"><svg class="ic i16"><use href="#v6"/></svg></div>
                <div class="cell-caret"><i class="caret"></i></div>
                <div class="cell"><svg class="ic i16"><use href="#v7"/></svg></div>
                <div class="cell-caret"><i class="caret"></i></div>
                <div class="cell"><svg class="ic i16"><use href="#sel9"/></svg></div>
                <div class="cell-caret"><i class="caret"></i></div>
                <div class="cell"><svg class="ic i16"><use href="#v9"/></svg></div>
                <div class="cell-caret"><i class="caret"></i></div>
            </div>
            <div class="sel-label label-end"><i class="caret"></i></div>
        </div>
    </div>

    <div class="main">
        <aside class="rail">
            <div class="rail-item first"><svg class="ic i14"><use href="#gear"/></svg></div>
            <div class="rail-item gap-s"><svg class="ic i22"><use href="#r1"/></svg></div>
            <div class="rail-item"><svg class="ic i22"><use href="#r2"/></svg></div>
            <div class="rail-item"><svg class="ic i22"><use href="#r3"/></svg></div>
            <div class="rail-item"><svg class="ic i22"><use href="#r4"/></svg></div>
            <div class="rail-item"><svg class="ic i22"><use href="#r5"/></svg></div>
            <div class="rail-item"><svg class="ic i22"><use href="#r6"/></svg></div>
            <div class="rail-item gap-m"><svg class="ic i24"><use href="#r7"/></svg></div>
            <div class="rail-item gap-m"><svg class="ic i22"><use href="#r8"/></svg></div>
            <div class="rail-item gap-m"><svg class="ic i22"><use href="#r9"/></svg></div>
            <div class="rail-item"><svg class="ic i22"><use href="#r10"/></svg></div>
            <div class="rail-item"><svg class="ic i22"><use href="#r11"/></svg></div>
        </aside>
        <div class="nav-panel"></div>
        <div class="workspace">
            <div class="doc-tabs">
                <div class="doc-tab">
                    <svg class="ic i16"><use href="#part"/></svg>
                    <span>_model5.prt</span>
                    <svg class="ic i12"><use href="#pagemark"/></svg>
                    <b>✕</b>
                </div>
            </div>
            <div class="canvas">
                <span class="axis-h h-a"></span>
                <span class="axis-h h-b"></span>
                <span class="axis-v v-a"></span>
                <span class="axis-v v-b"></span>
            </div>
        </div>
    </div>

    <div class="dialog">
        <div class="dlg-title">
            <span>定制</span>
            <b class="dlg-help">?</b>
            <svg class="dlg-x" viewBox="0 0 14 14"><path d="M1 1l12 12M13 1L1 13" stroke="#fff" stroke-width="2"/></svg>
        </div>
        <div class="dlg-tabs">
            <div class="dlg-tab on">命令</div>
            <div class="dlg-tab t2">选项卡/条</div>
            <div class="dlg-tab t3">快捷方式</div>
            <div class="dlg-tab t4">图标/工具提示</div>
        </div>
        <div class="dlg-pane">
            <p class="dlg-intro">要向功能区选项卡、边框条或 QAT 添加命令，选择一个类别并将命令从“命令”列表拖至所需的位置。</p>
            <div class="dlg-cols">
                <div class="col-left">
                    <div class="sec-label">类别</div>
                    <div class="tree">
                        <span class="vl vl-0"></span>
                        <span class="vl vl-1"></span>
                        <span class="vl vl-2"></span>
                        <div class="tree-list">
                            <div class="node"><i class="tg minus"></i>所有选项卡</div>
                            <div class="node l1"><i class="tg minus"></i>文件</div>
                            <div class="node l2"><i class="tg none"></i>顶部面板</div>
                            <div class="node l2"><i class="tg"></i>左侧面板</div>
                            <div class="node l2 sel"><i class="tg"></i><span>右侧面板</span></div>
                            <div class="node l2"><i class="tg none"></i>底部面板</div>
                            <div class="node l1"><i class="tg"></i>主页</div>
                            <div class="node l1"><i class="tg"></i>装配</div>
                            <div class="node l1"><i class="tg"></i>曲线</div>
                            <div class="node l1"><i class="tg"></i>曲面</div>
                            <div class="node l1"><i class="tg"></i>多边形建模</div>
                            <div class="node l1"><i class="tg"></i>增材制造设计</div>
                            <div class="node l1"><i class="tg"></i>逆向工程</div>
                            <div class="node l1"></div>
                        </div>
                        <div class="scroll">
                            <svg class="chev" viewBox="0 0 10 6"><path d="M1 5l4-4 4 4" fill="none" stroke="#333" stroke-width="1.500"/></svg>
                            <div class="thumb"></div>
                            <svg class="chev down" viewBox="0 0 10 6"><path d="M1 1l4 4 4-4" fill="none" stroke="#333" stroke-width="1.500"/></svg>
                        </div>
                    </div>
                </div>
                <div class="col-right">
                    <div class="search-sec">
                        <div class="sec-label">搜索</div>
                        <div class="search-row">
                            <div class="search-input"></div>
                            <div class="search-btn"><svg class="ic i16"><use href="#search"/></svg></div>
                        </div>
                    </div>
                    <div class="sec-label item-label">项</div>
                    <div class="items">
                        <div class="item"><svg class="ic i16"><use href="#pref"/></svg><span>首选项</span><i class="tri-r"></i></div>
                        <div class="item"><svg class="ic i16"><use href="#recent"/></svg><span>最近打开的部件(<u>Y</u>)</span><i class="tri-r"></i></div>
                        <div class="item"><i class="no-icon"></i><span>启动</span><i class="tri-r"></i></div>
                    </div>
                </div>
            </div>
        </div>
        <div class="dlg-foot">
            <button class="btn">键盘...</button>
            <button class="btn">关闭</button>
        </div>
    </div>

    <!-- hand drawn annotations on top of the screenshot -->
    <svg class="arrows" viewBox="0 0 1466 761">
        <polygon points="17,122 26.400,143.100 26.400,136.400 215,345 30.200,133 36.800,133.900"/>
        <polygon points="798,221 775.800,227.200 782.400,228.200 617,340 785.200,232.400 783.400,239"/>
        <polygon points="863,442 839.900,441.600 846,444.400 688,494 847.400,449.200 843.900,455"/>
        <polygon points="1120,482 1137.400,497.200 1134.600,491.100 1317,568 1136.600,486.500 1143,484.400"/>
    </svg>
    <span class="num n1">1</span>
    <span class="num n2">2</span>
    <span class="num n3">3</span>
    <span class="num n4">4</span>
    <span class="watermark">UG爱好者论坛@luofue</span>
</body>
</html>
```

FILE: styles.css
```css
:root {
    --teal: #529db6;
    --label: #2e7f98;
    --text: #333;
    --tab-bg: #d9d9d9;
    --line: #e6e6e6;
    --dlg-bg: #efefef;
}

html, body {
    margin: 0;
    padding: 0;
    width: 1466px;
    height: 761px;
    overflow: hidden;
}

body {
    position: relative;
    background: #fff;
    color: var(--text);
    font-family: "Open Sans", "Noto Sans CJK SC", sans-serif;
    font-size: 11px;
}

.sprite {
    position: absolute;
    width: 0;
    height: 0;
}

.ic {
    display: block;
    flex: none;
}

.i12 { width: 12px; height: 12px; }
.i14 { width: 14px; height: 14px; }
.i15 { width: 15px; height: 15px; }
.i16 { width: 16px; height: 16px; }
.i18 { width: 18px; height: 18px; }
.i20 { width: 20px; height: 20px; }
.i22 { width: 22px; height: 22px; }
.i24 { width: 24px; height: 24px; }
.i30 { width: 30px; height: 30px; }
.i32 { width: 32px; height: 32px; }
.i30-26 { width: 30px; height: 25px; }

.caret {
    display: block;
    width: 0;
    height: 0;
    border-left: 3.5px solid transparent;
    border-right: 3.5px solid transparent;
    border-top: 3.5px solid #222;
}

.caret-up {
    display: block;
    width: 0;
    height: 0;
    border-left: 3.5px solid transparent;
    border-right: 3.5px solid transparent;
    border-bottom: 3.5px solid #bbb;
}

.caret-menu {
    display: block;
    width: 7px;
    height: 5px;
    border-top: 1px solid #222;
    box-sizing: border-box;
    position: relative;
}

.caret-menu::after {
    content: "";
    position: absolute;
    top: 1px;
    left: 0;
    border-left: 3.5px solid transparent;
    border-right: 3.5px solid transparent;
    border-top: 3.5px solid #222;
}

/* quick access */
.qat {
    height: 21px;
    display: flex;
    align-items: center;
    position: relative;
}

.nx-logo {
    width: 29px;
    flex: none;
    align-self: flex-start;
    font: bold 20px/23px "Liberation Sans", sans-serif;
    color: #8c9ba8;
    height: 21px;
}

.qat-sep {
    width: 1px;
    height: 17px;
    background: #ddd;
    margin-left: 5px;
    flex: none;
}

.at-save { margin-left: 9px; }
.sep-a { margin-left: 7px; }
.at-undo { margin-left: 7px; }
.at-c1 { margin-left: 7px; }
.at-redo { margin-left: 7px; }
.sep-b { margin-left: 8px; }
.at-cut { margin-left: 6px; }
.at-copy { margin-left: 9px; }
.at-q { margin-left: 7px; }
.sep-c { margin-left: 6px; }
.at-win { margin-left: 6px; }
.at-win2 { margin-left: 7px; }
.at-c2 { margin-left: 7px; }
.sep-d { margin-left: 6px; }
.at-c3 { margin-left: 3px; }
.at-c4 { margin-left: 4px; }

.qat-text {
    font-size: 11px;
    margin-left: 5px;
}

.app-title {
    position: absolute;
    left: 1066px;
    top: 0;
    font-size: 12px;
    line-height: 15px;
    color: #222;
}

/* ribbon tabs */
.tabs {
    height: 28px;
    background: var(--tab-bg);
    display: flex;
    align-items: stretch;
    font-size: 13px;
    line-height: 28px;
    color: #444;
}

.tab-file {
    box-sizing: border-box;
    width: 74px;
    padding-left: 12px;
    margin-right: 2px;
    background: var(--teal);
    color: #eaf4f7;
    font-size: 12.5px;
}

.tab {
    padding: 0 13px;
}

.tab.active {
    background: #fff;
    color: var(--label);
}

.tab-pmi {
    letter-spacing: 0.4px;
    padding-right: 14px;
}

.tab-wide {
    letter-spacing: 0.2px;
}

.tab-plus {
    align-self: center;
    margin-left: 6px;
}

/* ribbon */
.ribbon {
    height: 114px;
    box-sizing: border-box;
    padding-top: 3px;
    display: flex;
    border-bottom: 2px solid #e2e2e2;
}

.group {
    box-sizing: border-box;
    height: 109px;
    display: flex;
    flex-direction: column;
    border-right: 2px solid #ededed;
    position: relative;
}

.g-sketch { width: 204px; }
.g-feature { width: 370px; padding-left: 9px; }
.g-sync { width: 171px; padding-left: 3px; }
.g-std { width: 104px; padding-left: 4px; }
.g-mach { width: 52px; padding-left: 4px; }
.g-build { width: 98px; padding-left: 5px; }
.g-surf { width: 42px; }
.g-ana { width: 55px; border: 1px solid #eee; }

.group-body {
    height: 92px;
    display: flex;
    flex: none;
}

.big {
    display: flex;
    flex-direction: column;
    align-items: center;
    flex: none;
    line-height: 16px;
    white-space: nowrap;
}

.big .caret { margin-top: 4px; }

.big-icon {
    height: 36px;
    margin-top: 3px;
    margin-bottom: 1px;
    display: flex;
    align-items: center;
    justify-content: center;
}

.w32 { width: 32px; }
.w33 { width: 33px; }
.w36 { width: 36px; margin-left: 2px; }
.w38 { width: 38px; }
.w44 { width: 44px; }
.w46 { width: 46px; }

.blank-icon {
    width: 29px;
    height: 31px;
    margin-bottom: 5px;
    margin-left: 4px;
    box-sizing: border-box;
    border-top: 1px solid #aaa;
    border-bottom: 1px solid #aaa;
}

.more { margin-left: 6px; }

.more-box {
    box-sizing: border-box;
    width: 38px;
    height: 35px;
    margin-bottom: 2px;
    border: 1px solid #ddd;
    border-radius: 3px;
}

.rows {
    display: flex;
    flex-direction: column;
    flex: none;
}

.r-pattern { width: 70px; margin-left: 12px; }
.r-chamfer { width: 59px; margin-left: 7px; }
.r-sync { width: 69px; margin-left: 4px; }

.row {
    height: 22px;
    display: flex;
    align-items: center;
    gap: 4px;
    white-space: nowrap;
}

.row .caret { margin-left: 4px; }

.group-label {
    height: 16px;
    display: flex;
    align-items: center;
    justify-content: space-between;
    color: var(--label);
    line-height: 16px;
    white-space: nowrap;
    flex: none;
    padding-right: 6px;
    margin-top: auto;
    margin-bottom: -1px;
}

.center-label span {
    flex: 1;
    text-align: center;
}

.g-sketch > .center-label { padding-right: 9px; }
.g-sketch > .center-label span { padding-right: 8px; }
.g-feature > .center-label { padding-right: 10px; }
.g-feature > .center-label span { padding-right: 14px; }
.g-sync > .center-label { padding-right: 9px; }
.g-sync > .center-label span { padding-right: 8px; }

.g-std > .group-label { margin-left: -4px; padding-right: 11px; }
.g-mach > .group-label { margin-left: -4px; padding-right: 11px; }
.g-build > .group-label { margin-left: -3px; padding-right: 9px; }

.subgroup {
    box-sizing: border-box;
    width: 121px;
    height: 92px;
    margin-left: 8px;
    margin-top: 1px;
    border: 1px solid #eee;
    padding: 5px 0 0 1px;
    display: flex;
    flex-direction: column;
}

.sub-top {
    display: flex;
}

.gallery {
    box-sizing: border-box;
    width: 99px;
    height: 66px;
    border: 1px solid #ddd;
    padding-bottom: 2px;
    display: grid;
    grid-template-columns: repeat(3, 32.5px);
    grid-auto-rows: 34px;
    align-content: center;
    place-items: center;
}

.gallery-scroll {
    width: 18px;
    display: flex;
    flex-direction: column;
    align-items: center;
    gap: 18px;
    padding-top: 8px;
}

.sub-label {
    height: 14px;
    line-height: 14px;
    padding-right: 7px;
    margin-top: auto;
    margin-bottom: -1px;
}

.sub-label span {
    flex: 1;
    text-align: center;
    padding-left: 8px;
}

.icon-grid {
    display: flex;
    flex-direction: column;
    gap: 16px;
    padding-top: 12px;
    height: 80px;
    flex: none;
}

.icon-row {
    display: flex;
    align-items: center;
    gap: 5.5px;
}

.vsep {
    width: 1px;
    height: 18px;
    background: #ddd;
    margin: 0 -1px 0 -1px;
}

.fit-tag {
    font: bold 8px/10px "Liberation Sans", sans-serif;
    color: #7a3030;
    padding-top: 9px;
    width: 18px;
    position: relative;
}

.fit-tag::before {
    content: "";
    position: absolute;
    top: 1px;
    left: 3px;
    width: 12px;
    height: 7px;
    background: #4a5560;
    border-radius: 3px;
}

.surf-btn { width: 40px; }
.surf-btn .big-icon { height: 26px; margin-top: 6px; margin-bottom: 6px; }
.surf-btn .caret { margin-top: 3px; }
.ana-btn { width: 53px; }

.g-ana .group-label {
    padding-left: 5px;
    padding-right: 9px;
}

/* selection bar */
.selbar {
    height: 52px;
    box-sizing: border-box;
    display: flex;
    border-bottom: 1px solid #999;
}

.menu-btn {
    box-sizing: border-box;
    width: 80px;
    padding: 17px 0 0 3px;
    display: flex;
    align-items: flex-start;
    gap: 4px;
    border-right: 2px solid #eee;
    line-height: 16px;
}

.menu-btn .caret { margin: 6px 0 0 3px; }

.sel-group {
    display: flex;
    flex-direction: column;
    border-right: 2px solid #eee;
    box-sizing: border-box;
}

.sel-left { width: 926px; padding-left: 12px; }
.sel-right { width: 287px; padding-left: 6px; }

.sel-row {
    height: 36px;
    padding-top: 9px;
    box-sizing: border-box;
    display: flex;
    align-items: flex-start;
}

.sel-label {
    color: var(--label);
    line-height: 14px;
    text-align: center;
    padding-right: 30px;
}

.label-end {
    display: flex;
    justify-content: flex-end;
    padding-right: 7px;
    padding-top: 5px;
}

.combo {
    box-sizing: border-box;
    height: 19px;
    border: 1px solid #888;
    line-height: 17px;
    padding-left: 2px;
    position: relative;
    color: #222;
}

.c1 { width: 133px; margin-right: 8px; }
.c2 { width: 140px; margin-right: 5px; }

.combo-caret {
    position: absolute;
    right: 5px;
    top: 7px;
}

.cell {
    width: 25px;
    height: 18px;
    display: flex;
    align-items: center;
    justify-content: center;
}

.tight { margin-left: -3px; }

.cell-caret {
    width: 11px;
    height: 18px;
    display: flex;
    align-items: center;
    margin-left: -1px;
    margin-right: 1px;
    padding-left: 1px;
    box-sizing: border-box;
}

/* main area */
.main {
    height: 546px;
    display: flex;
}

.rail {
    box-sizing: border-box;
    width: 25px;
    background: var(--tab-bg);
    border-right: 1px solid #a3a3a3;
    display: flex;
    flex-direction: column;
    overflow: hidden;
}

.rail-item {
    height: 42px;
    flex: none;
    display: flex;
    align-items: center;
    justify-content: flex-start;
    width: 24px;
}

.rail-item.first { height: 26px; padding-left: 1px; box-sizing: border-box; }
.gap-s { margin-top: 15px; }
.gap-m { margin-top: 12px; }

.nav-panel {
    width: 80px;
    background: #fff;
}

.workspace {
    flex: 1;
    display: flex;
    flex-direction: column;
    min-width: 0;
}

.doc-tabs {
    height: 23px;
    box-sizing: border-box;
    border-bottom: 2px solid var(--teal);
    flex: none;
}

.doc-tab {
    width: 133px;
    height: 21px;
    background: var(--teal);
    color: #eef6f8;
    font-size: 12.5px;
    line-height: 21px;
    display: flex;
    align-items: center;
    padding-left: 7px;
    box-sizing: border-box;
}

.doc-tab span { margin-left: 3px; }
.doc-tab .i12 { margin-left: 5px; }

.doc-tab b {
    font-size: 11px;
    margin-left: 5px;
    color: #fff;
}

.canvas {
    flex: 1;
    position: relative;
    background: linear-gradient(180deg, #b4b5b6 0%, #e7e8e9 100%);
    border-left: 2px solid #cfcfcf;
}

.axis-h {
    position: absolute;
    top: 407px;
    height: 1px;
    background: #333;
}

.h-a { left: 0; width: 1270px; }
.h-b { left: 1334px; right: 0; }

.axis-v {
    position: absolute;
    width: 1px;
    left: 1302px;
    background: #333;
}

.v-a { top: 0; height: 374px; }
.v-b { top: 437px; bottom: 0; }

/* customize dialog */
.dialog {
    position: absolute;
    left: 798px;
    top: 200px;
    width: 474px;
    height: 477px;
    box-sizing: border-box;
    background: var(--dlg-bg);
    border: 1px solid #a8a8a8;
    border-top: 0;
    font-size: 12px;
}

.dlg-title {
    height: 28px;
    margin: 0 -1px;
    background: var(--teal);
    color: #e9f3f6;
    display: flex;
    align-items: center;
    padding: 0 7px 0 9px;
    font-size: 11.5px;
}

.dlg-help {
    margin-left: auto;
    color: #fff;
    font: bold 16px "Liberation Sans", sans-serif;
}

.dlg-x {
    width: 13px;
    height: 13px;
    margin-left: 10px;
}

.dlg-tabs {
    display: flex;
    align-items: flex-end;
    height: 35px;
    padding-left: 9px;
}

.dlg-tab {
    box-sizing: border-box;
    height: 28px;
    line-height: 25px;
    text-align: center;
    border: 1px solid #c8c8c8;
    border-bottom: 0;
    background: var(--dlg-bg);
    margin-right: 1px;
}

.dlg-tab.on {
    width: 56px;
    height: 32px;
    background: #fff;
    line-height: 28px;
    margin-bottom: -1px;
    position: relative;
}

.t2 { width: 66px; }
.t3 { width: 63px; }
.t4 { width: 92px; }

.dlg-pane {
    box-sizing: border-box;
    width: 454px;
    height: 365px;
    margin-left: 9px;
    background: #fff;
    border: 1px solid #bdbdbd;
    padding: 13px 6px 0;
}

.dlg-intro {
    margin: 0;
    line-height: 17px;
    height: 34px;
}

.dlg-cols {
    display: flex;
    margin-top: 11px;
    gap: 1px;
}

.col-left {
    width: 240px;
    height: 301px;
    box-sizing: border-box;
    padding-left: 10px;
    border-right: 1px solid #eee;
    border-bottom: 2px solid #dcdcdc;
}

.col-right {
    width: 198px;
    height: 301px;
    box-sizing: border-box;
    padding-left: 9px;
    border-bottom: 2px solid #dcdcdc;
}

.sec-label {
    color: var(--label);
    font-size: 13px;
    line-height: 20px;
}

.tree {
    position: relative;
    box-sizing: border-box;
    width: 220px;
    height: 265px;
    margin-top: 5px;
    border: 1px solid #d4d4d4;
    display: flex;
    overflow: hidden;
}

.tree-list {
    width: 200px;
    flex: none;
    position: relative;
}

.node {
    box-sizing: border-box;
    height: 20px;
    display: flex;
    align-items: center;
    padding-left: 5px;
    border-bottom: 1px solid #ececec;
    background: #fff;
    white-space: nowrap;
}

.node:nth-child(odd) { background: #f8f8f8; }
.node.l1 { padding-left: 24px; }
.node.l2 { padding-left: 43px; }

.node.sel > span {
    flex: 1;
    align-self: stretch;
    margin-left: -2px;
    padding-left: 1px;
    background: #8cc0d0;
    border: 1px dotted #333;
    line-height: 17px;
}

.tg {
    width: 9px;
    height: 9px;
    box-sizing: border-box;
    margin-right: 8px;
    border: 1px solid #ddd;
    background: #fff;
    position: relative;
    flex: none;
}

.tg.none {
    border: 0;
    background: none;
}

.tg::before {
    content: "";
    position: absolute;
    left: 1px;
    top: 3px;
    width: 5px;
    height: 1px;
    background: #222;
}

.tg::after {
    content: "";
    position: absolute;
    left: 3px;
    top: 1px;
    width: 1px;
    height: 5px;
    background: #222;
}

.tg.none::before,
.tg.none::after,
.tg.minus::after {
    display: none;
}

.vl {
    position: absolute;
    width: 0;
    border-left: 1px dotted #888;
    z-index: 2;
}

.vl-0 { left: 9px; top: 0; bottom: 0; }
.vl-1 { left: 28px; top: 24px; bottom: 0; }
.vl-2 { left: 47px; top: 44px; height: 66px; }

.scroll {
    flex: 1;
    background: #f2f2f2;
    position: relative;
}

.thumb {
    height: 66px;
    margin-top: 22px;
    background: #c8c8c8;
}

.chev {
    position: absolute;
    left: 4px;
    top: 6px;
    width: 10px;
    height: 6px;
}

.chev.down {
    top: auto;
    bottom: 6px;
}

.search-sec {
    height: 56px;
    margin-left: -9px;
    padding-left: 9px;
    border-bottom: 2px solid #dcdcdc;
}

.search-row {
    display: flex;
    gap: 3px;
    margin-top: 4px;
}

.search-input {
    box-sizing: border-box;
    width: 154px;
    height: 23px;
    border: 1px solid #9a9a9a;
    background: #fff;
}

.search-btn {
    box-sizing: border-box;
    width: 23px;
    height: 23px;
    border: 1px solid #bbb;
    display: flex;
    align-items: center;
    justify-content: center;
}

.item-label {
    margin-top: 3px;
}

.items {
    box-sizing: border-box;
    width: 180px;
    height: 207px;
    margin-top: 4px;
    border: 1px solid #8f8f8f;
    padding: 1px 6px 0 8px;
}

.item {
    height: 26px;
    display: flex;
    align-items: center;
    font-size: 11px;
    gap: 8px;
}

.item span { flex: 1; }
.no-icon { width: 16px; }

.tri-r {
    width: 0;
    height: 0;
    border-top: 4px solid transparent;
    border-bottom: 4px solid transparent;
    border-left: 4px solid #222;
}

.dlg-foot {
    display: flex;
    justify-content: flex-end;
    gap: 2px;
    padding: 5px 12px 0 0;
}

.btn {
    width: 59px;
    height: 29px;
    border: 1px solid #b0b0b0;
    background: #ececec;
    color: #333;
    font: 12px "Open Sans", "Noto Sans CJK SC", sans-serif;
    padding: 0;
}

/* annotations */
.arrows {
    position: absolute;
    left: 0;
    top: 0;
    width: 1466px;
    height: 761px;
    fill: #ee2b1e;
    pointer-events: none;
}

.num {
    position: absolute;
    color: #e43a33;
    font: 22px/26px "Open Sans", sans-serif;
}

.n1 { left: 543px; top: 327px; }
.n2 { left: 647px; top: 496px; }
.n3 { left: 1295px; top: 583px; }
.n4 { left: 225px; top: 347px; }

.watermark {
    position: absolute;
    right: 3px;
    bottom: 2px;
    color: #7d7d7d;
    font: 13.5px/16px "Liberation Mono", "Noto Sans CJK SC", monospace;
    letter-spacing: 1px;
    text-shadow: 0 0 2px #fff;
}
```
